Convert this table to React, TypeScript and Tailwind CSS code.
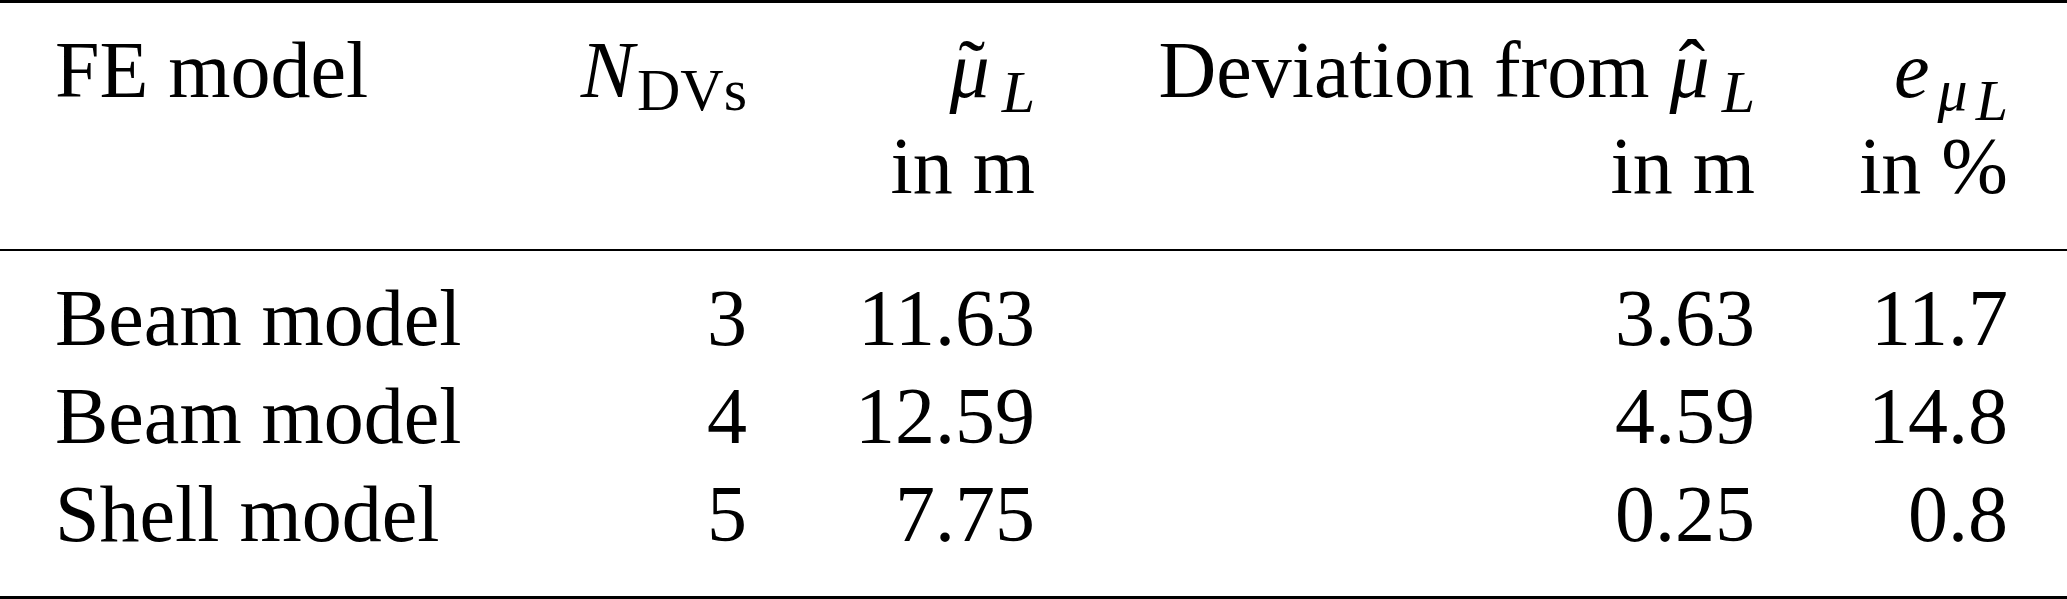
import React from 'react';

interface ResultRow {
  model: string;
  dvs: string;
  mu: string;
  deviation: string;
  error: string;
}

const rows: ResultRow[] = [
  { model: 'Beam model', dvs: '3', mu: '11.63', deviation: '3.63', error: '11.7' },
  { model: 'Beam model', dvs: '4', mu: '12.59', deviation: '4.59', error: '14.8' },
  { model: 'Shell model', dvs: '5', mu: '7.75', deviation: '0.25', error: '0.8' },
];

const cols = 'grid grid-cols-[520px_227px_288px_720px_312px] whitespace-nowrap';

// mu with an accent placed over it (tilde or hat)
const AccentMu: React.FC<{ accent: string }> = ({ accent }) => (
  <span className="relative inline-block italic">
    μ
    <span className="absolute left-[9px] top-[-2px] not-italic">{accent}</span>
  </span>
);

const App: React.FC = () => {
  return (
    <div className="w-[2067px] h-[599px] bg-white text-black font-['Liberation_Serif','Times_New_Roman',serif] text-[80px]">
      {/* header */}
      <div className={`${cols} border-t-[3px] border-b-2 border-black pt-[19px] pb-[35px] leading-[96px]`}>
        <div className="pl-[55px]">FE model</div>
        <div className="text-right">
          <i>N</i>
          <span className="relative top-[13px] ml-[3px] text-[60px] leading-none">DVs</span>
        </div>
        <div className="text-right">
          <div>
            <AccentMu accent="˜" />
            <span className="relative top-[15px] ml-[12px] text-[60px] leading-none italic">L</span>
          </div>
          <div>in m</div>
        </div>
        <div className="text-right">
          <div>
            Deviation from <AccentMu accent="ˆ" />
            <span className="relative top-[15px] ml-[12px] text-[60px] leading-none italic">L</span>
          </div>
          <div>in m</div>
        </div>
        <div className="text-right pr-[59px]">
          <div>
            <i>e</i>
            <span className="relative top-[13px] ml-[8px] text-[60px] leading-none italic">μ</span>
            <span className="relative top-[23px] ml-[8px] text-[58px] leading-none italic">L</span>
          </div>
          <div>in %</div>
        </div>
      </div>

      {/* body */}
      <div className="border-b-[3px] border-black pt-[18px] pb-[33px] leading-[98px]">
        {rows.map((row, i) => (
          <div key={i} className={cols}>
            <div className="pl-[55px]">{row.model}</div>
            <div className="text-right">{row.dvs}</div>
            <div className="text-right">{row.mu}</div>
            <div className="text-right">{row.deviation}</div>
            <div className="text-right pr-[59px]">{row.error}</div>
          </div>
        ))}
      </div>
    </div>
  );
};

export default App;
